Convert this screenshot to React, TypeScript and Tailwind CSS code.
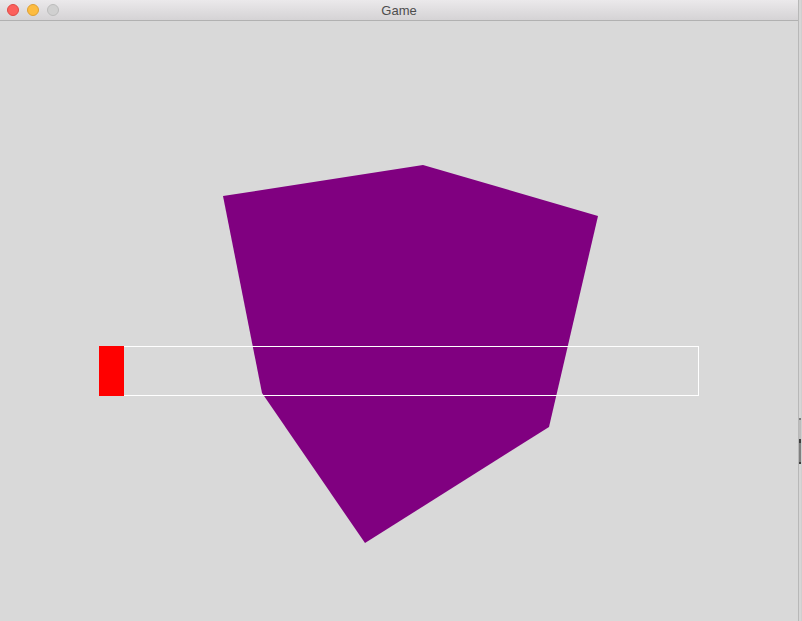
import React from "react";

export default function App() {
  return (
    <div className="flex w-[802px] h-[621px] bg-[#cfcfcf] overflow-hidden" style={{ fontFamily: '"Helvetica Neue", "Liberation Sans", Arial, sans-serif' }}>
      <div className="flex flex-col w-[799px] h-full border-r border-[#b8b8b8]">
        <div className="relative flex items-center justify-center h-[21px] shrink-0 bg-gradient-to-b from-[#ebe9eb] to-[#d5d3d5] border-b border-[#b1b1b1]">
          <div className="absolute left-[7px] top-[4px] flex gap-[8px]">
            <span className="w-[12px] h-[12px] rounded-full bg-[#fc605c] border border-[#de4a45]" />
            <span className="w-[12px] h-[12px] rounded-full bg-[#fdbc40] border border-[#dea033]" />
            <span className="w-[12px] h-[12px] rounded-full bg-[#d0d0d0] border border-[#bcbcbc]" />
          </div>
          <span className="text-[13px] text-[#4d4d4d] leading-none">Game</span>
        </div>
        <div className="flex-1 bg-[#d9d9d9]">
          <svg width="798" height="600" viewBox="0 21 798 600" className="block">
            <polygon points="223,196 423,165 598,216 549,427 365,543 262,393" fill="#800080" />
            <rect x="99.5" y="346.5" width="599" height="49" fill="none" stroke="#ffffff" strokeWidth="1" />
            <rect x="99" y="346" width="25" height="50" fill="#ff0000" />
          </svg>
        </div>
      </div>
      <div className="flex flex-col w-[2px]">
        <div className="h-[418px] bg-[#d6d6d6]" />
        <div className="h-[2px] bg-[#7a7a7a]" />
        <div className="h-[19px] bg-[#bdbdbd]" />
        <div className="h-[4px] bg-[#3e3e3e]" />
        <div className="h-[19px] bg-[#808080]" />
        <div className="h-[2px] bg-[#3e3e3e]" />
        <div className="flex-1 bg-[#d6d6d6]" />
      </div>
    </div>
  );
}
